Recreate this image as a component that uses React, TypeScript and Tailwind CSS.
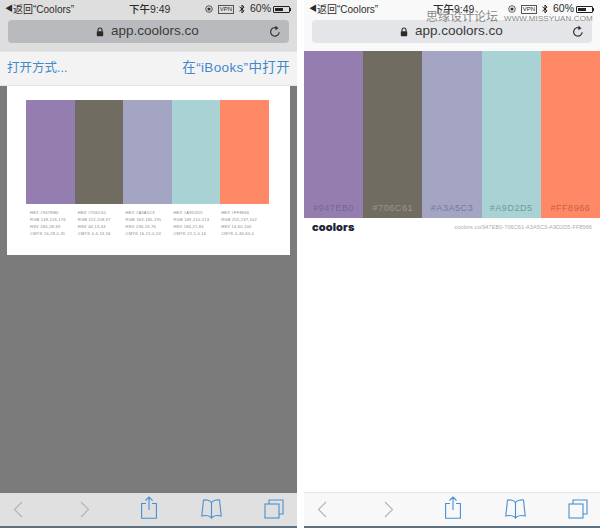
const FONT = { fontFamily: '"Liberation Sans", "Noto Sans CJK SC", sans-serif' };

const colors = [
  { hex: "#947EB0", cls: "bg-[#947eb0]", text: "text-[#7a6496]", rgb: "148,126,176", hsv: "266,28,69", cmyk: "16,28,0,31" },
  { hex: "#706C61", cls: "bg-[#706c61]", text: "text-[#9a968c]", rgb: "112,108,97", hsv: "44,13,44", cmyk: "0,4,13,56" },
  { hex: "#A3A5C3", cls: "bg-[#a3a5c3]", text: "text-[#777a9c]", rgb: "163,165,195", hsv: "236,16,76", cmyk: "16,15,0,24" },
  { hex: "#A9D2D5", cls: "bg-[#a9d2d5]", text: "text-[#6f9a9e]", rgb: "169,210,213", hsv: "184,21,84", cmyk: "21,1,0,16" },
  { hex: "#FF8966", cls: "bg-[#ff8966]", text: "text-[#c9613f]", rgb: "255,137,102", hsv: "14,60,100", cmyk: "0,46,60,0" },
];

function StatusBar() {
  return (
    <div className="relative flex h-[18px] items-center justify-between pl-[5px] pr-[6px] text-[10px] text-[#2b2b2b]">
      <div className="flex items-center">
        <span className="text-[8px] leading-none">◀</span>
        <span>返回“Coolors”</span>
      </div>
      <span className="absolute left-[129px] top-[2px] text-[10.5px] leading-[14px] font-medium">下午9:49</span>
      <div className="flex items-center gap-[5px]">
        <svg width="8" height="8" viewBox="0 0 8 8" fill="none">
          <circle cx="4" cy="4" r="3.3" stroke="#333" strokeWidth="0.8" />
          <circle cx="4" cy="4" r="1.6" fill="#333" />
        </svg>
        <span className="border-[0.5px] border-[#555] px-[1px] text-[6px] leading-[7px]">VPN</span>
        <svg width="6" height="10" viewBox="0 0 6 10" fill="none" stroke="#222" strokeWidth="1">
          <path d="M0.5 2.8 5 6.8 3 9V1l2 2.2L0.5 7.2" />
        </svg>
        <span className="text-[10.5px] font-medium">60%</span>
        <div className="-ml-[3px] flex items-center">
          <div className="h-[7px] w-[17px] rounded-[1px] border-[0.5px] border-[#222] p-[1px]">
            <div className="h-full w-[60%] bg-[#222]" />
          </div>
          <div className="h-[3px] w-[1px] bg-[#222]" />
        </div>
      </div>
    </div>
  );
}

function UrlBar({ bg }: { bg: string }) {
  return (
    <div className={`mx-[8px] mt-[2px] flex h-[23px] items-center rounded-[4px] pl-[88px] pr-[8px] ${bg}`}>
      <svg width="8" height="10" viewBox="0 0 8 10" className="mr-[7px]">
        <path d="M2 4.5V3a2 2 0 0 1 4 0v1.5" fill="none" stroke="#2a2a2a" strokeWidth="1.1" />
        <rect x="0.8" y="4.2" width="6.4" height="5" rx="0.6" fill="#2a2a2a" />
      </svg>
      <span className="text-[13.5px] text-[#3a3a3a]">app.coolors.co</span>
      <svg width="12" height="13" viewBox="0 0 12 13" fill="none" className="ml-auto" stroke="#333" strokeWidth="1.2">
        <path d="M10.2 7.2a4.3 4.3 0 1 1-2-4" />
        <path d="M6.6 0.8 9.2 3.4 6.2 4.8" fill="#333" strokeWidth="0.4" />
      </svg>
    </div>
  );
}

function Toolbar({ bg }: { bg: string }) {
  const blue = "#4a90d0";
  return (
    <div className={`flex h-[35px] items-center border-b-2 border-[#5c7080] pb-[1px] ${bg}`}>
      <div className="flex w-full items-center pl-[13px]">
        <svg width="10" height="17" viewBox="0 0 10 17" fill="none" stroke="#b4b4b4" strokeWidth="1.1">
          <path d="M9 1 1.500 8.500 9 16" />
        </svg>
        <svg width="10" height="17" viewBox="0 0 10 17" fill="none" stroke="#b4b4b4" strokeWidth="1.1" className="ml-[57px]">
          <path d="M1 1l7.500 7.500L1 16" />
        </svg>
        <svg width="16" height="23" viewBox="0 0 16 23" fill="none" stroke={blue} strokeWidth="1.1" className="ml-[51px] mb-[4px]">
          <path d="M5 7.500H.6v14.800h14.800V7.500H11M8 14V1M4.500 4.500 8 1l3.500 3.500" />
        </svg>
        <svg width="21" height="20" viewBox="0 0 21 20" fill="none" stroke={blue} strokeWidth="1.1" className="ml-[44px]">
          <path d="M10.500 3.500C9 1.500 5 .5 2.500 1L.8 17c3-.7 6.700-.5 8.700 1l1 1.200 1-1.200c2-1.500 5.700-1.700 8.700-1L18.500 1C16 .5 12 1.500 10.500 3.500V18" />
        </svg>
        <svg width="20" height="20" viewBox="0 0 20 20" fill="none" stroke={blue} strokeWidth="1.1" className="ml-[42px]">
          <path d="M5 5V1h14v14h-4" />
          <rect x="1" y="5" width="14" height="14" />
        </svg>
      </div>
    </div>
  );
}

function LeftPhone() {
  return (
    <div className="flex h-[528px] w-[297px] flex-col bg-[#7b7b7b]">
      <div className="h-[51px] bg-[#dedede]">
        <StatusBar />
        <UrlBar bg="bg-[#b9babd]" />
      </div>
      <div className="flex h-[35px] items-center justify-between border-y border-[#e4e4e4] bg-[#f3f3f3] px-[7px] text-[#4289cc]">
        <span className="text-[12.500px]">打开方式...</span>
        <span className="text-[13.500px] tracking-[0.35px]">在“iBooks”中打开</span>
      </div>
      <div className="mx-[7px] h-[169px] bg-white px-[19px] pt-[14px]">
        <div className="flex h-[104px] w-[243px]">
          {colors.map((c) => (
            <div key={c.hex} className={`flex-1 ${c.cls}`} />
          ))}
        </div>
        <div className="mt-[5px] flex w-[243px] pl-[4px]">
          {colors.map((c) => (
            <div key={c.hex} className="flex-1 text-[4px] leading-[7px] tracking-[0.25px] text-[#85858c]">
              <div>HEX {c.hex}</div>
              <div>RGB {c.rgb}</div>
              <div>HSV {c.hsv}</div>
              <div>CMYK {c.cmyk}</div>
            </div>
          ))}
        </div>
      </div>
      <div className="flex-1" />
      <Toolbar bg="bg-[#e0e0e0]" />
    </div>
  );
}

function RightPhone() {
  return (
    <div className="relative flex h-[528px] w-[296px] flex-col bg-white">
      <div className="h-[51px] bg-[#f9f9f9]">
        <StatusBar />
        <UrlBar bg="bg-[#e4e5e8]" />
      </div>
      <div className="flex h-[167px]">
        {colors.map((c) => (
          <div key={c.hex} className={`flex flex-1 items-end justify-center pb-[5px] ${c.cls}`}>
            <span className={`text-[9px] leading-[10px] tracking-[0.55px] ${c.text}`}>{c.hex}</span>
          </div>
        ))}
      </div>
      <div className="flex h-[18px] items-center justify-between px-[8px]">
        <span className="font-['Inter'] text-[11px] font-black leading-none tracking-[0.1px] text-[#23233a]">coolors</span>
        <span className="text-[5.500px] tracking-[0.1px] text-[#aaaab2]">coolors.co/947EB0-706C61-A3A5C3-A9D2D5-FF8966</span>
      </div>
      <div className="flex-1" />
      <div className="border-t border-[#e8e8e8]">
        <Toolbar bg="bg-[#f8f8f8]" />
      </div>
      <div className="absolute left-[122px] top-[10px] flex items-baseline gap-[6px] whitespace-nowrap text-[#8a8a8a]">
        <span className="text-[12px] leading-[14px]">思缘设计论坛</span>
        <span className="text-[8px] leading-[14px] tracking-[0.1px]">WWW.MISSYUAN.COM</span>
      </div>
    </div>
  );
}

export default function App() {
  return (
    <div className="flex h-[528px] w-[600px] gap-[7px] overflow-hidden bg-white" style={FONT}>
      <LeftPhone />
      <RightPhone />
    </div>
  );
}
